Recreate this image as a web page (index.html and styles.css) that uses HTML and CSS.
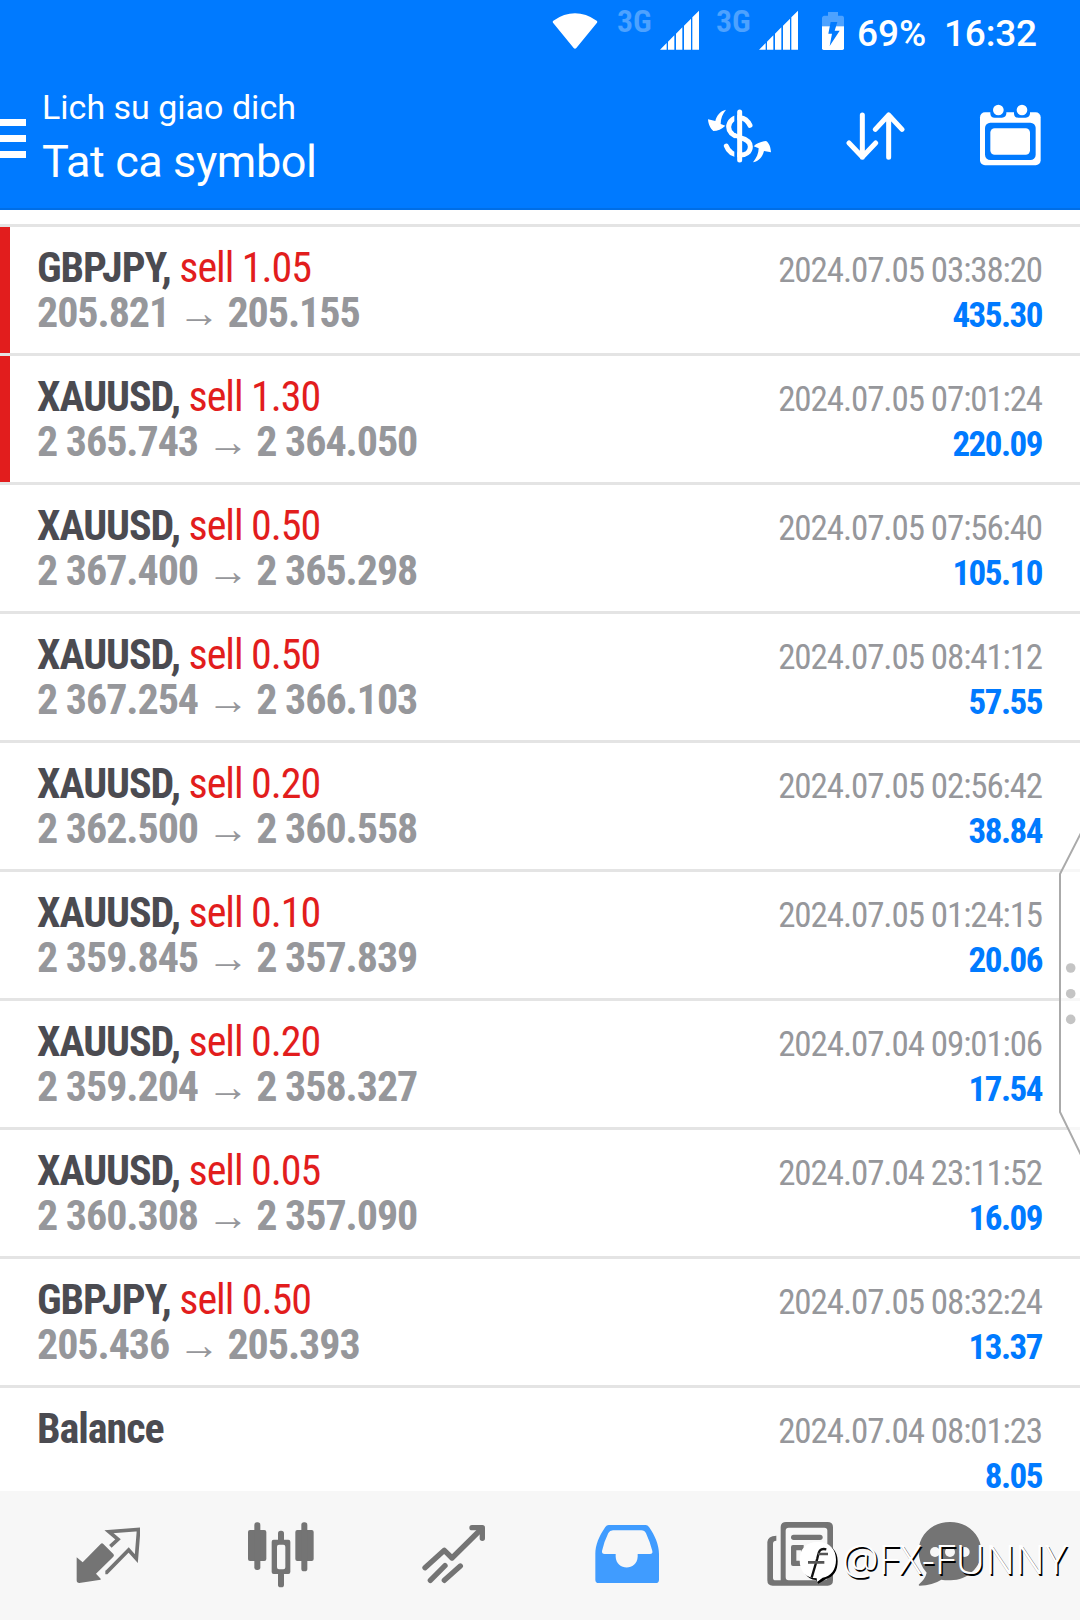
FILE: index.html
```
<!DOCTYPE html>
<html lang="vi">
<head>
    <meta charset="UTF-8">
    <meta name="viewport" content="width=device-width, initial-scale=1.0">
    <title>Lich su giao dich</title>
    <link rel="stylesheet" href="styles.css">
</head>
<body>
    <header class="header">
        <div class="status">
            <svg class="wifi" width="46" height="38" viewBox="36 36 138 114"><path d="M40 62Q105 18 170 62Q173 65 171 68L109 144Q105 149 101 144L39 68Q37 65 40 62Z"/></svg>
            <span class="net">3G</span>
            <svg class="signal" width="39" height="40" viewBox="0 0 117 120"><path d="M0 119L20 99V119ZM24 119V95L43 76V119ZM48 119V71L67 52V119ZM72 119V47L93 26V119ZM97 119V22L117 2V119Z"/></svg>
            <span class="net">3G</span>
            <svg class="signal" width="39" height="40" viewBox="0 0 117 120"><path d="M0 119L20 99V119ZM24 119V95L43 76V119ZM48 119V71L67 52V119ZM72 119V47L93 26V119ZM97 119V22L117 2V119Z"/></svg>
            <svg class="battery" width="22" height="38" viewBox="846 36 66 114">
                <path opacity=".3" d="M864 36H894V47H907Q912 48 912 53V79H846V53Q847 48 852 47H864Z"/>
                <path d="M846 79H912V145Q912 150 907 150H851Q846 150 846 145Z"/>
                <path class="blue" d="M872 66H892L884 92H899L869 138L876 101H865Z"/>
            </svg>
            <span class="percent">69%</span>
            <span class="time">16:32</span>
        </div>
        <div class="toolbar">
            <div class="menu"><i></i><i></i><i></i></div>
            <div class="titles">
                <div class="subtitle">Lich su giao dich</div>
                <div class="title">Tat ca symbol</div>
            </div>
            <div class="actions">
                <svg width="66" height="66" viewBox="48 40 198 198">
                    <path class="line" d="M180 107C174 94 164 85 150 84C130 82 116 96 116 112C116 130 130 138 150 144C170 149 181 157 181 171C181 188 166 196 150 196C128 196 115 186 109 169"/>
                    <path class="blue" d="M133 74H142V130H133ZM133 146H142V208H133Z"/>
                    <path class="line" d="M149 67V211"/>
                    <path d="M108 60C90 64 80 78 76 94L54 89C55 105 62 118 70 124C82 123 96 119 106 108L92 103C92 86 98 72 108 60Z"/>
                    <path d="M189 218C207 214 217 203 222 184L243 188C242 173 238 160 228 154C215 156 201 160 191 170L206 176C206 192 199 206 189 218Z"/>
                </svg>
                <svg width="59" height="66" viewBox="468 40 177 198"><path class="line" d="M517 76V203M477 160L517 202L557 160M596 203V76M556 119L596 76L636 119"/></svg>
                <svg width="63" height="66" viewBox="867 40 189 198">
                    <rect x="870" y="68" width="182" height="159" rx="15"/>
                    <path class="blue" d="M901 60V72Q902 84 914 84H936Q948 82 949 72V60ZM972 60V72Q973 84 985 84H1007Q1019 82 1020 72V60Z"/>
                    <circle cx="925" cy="61" r="16"/><circle cx="996" cy="61" r="16"/>
                    <rect class="blue" x="885" y="99" width="152" height="112" rx="16"/>
                    <rect x="901" y="116" width="119" height="79" rx="13"/>
                </svg>
            </div>
        </div>
    </header>

    <main class="list">
        <div class="row marked">
            <div class="deal"><b>GBPJPY,</b> <span>sell 1.05</span></div><div class="date">2024.07.05 03:38:20</div>
            <div class="price">205.821 <em>→</em> 205.155</div><div class="profit">435.30</div>
        </div>
        <div class="row marked">
            <div class="deal"><b>XAUUSD,</b> <span>sell 1.30</span></div><div class="date">2024.07.05 07:01:24</div>
            <div class="price">2 365.743 <em>→</em> 2 364.050</div><div class="profit">220.09</div>
        </div>
        <div class="row">
            <div class="deal"><b>XAUUSD,</b> <span>sell 0.50</span></div><div class="date">2024.07.05 07:56:40</div>
            <div class="price">2 367.400 <em>→</em> 2 365.298</div><div class="profit">105.10</div>
        </div>
        <div class="row">
            <div class="deal"><b>XAUUSD,</b> <span>sell 0.50</span></div><div class="date">2024.07.05 08:41:12</div>
            <div class="price">2 367.254 <em>→</em> 2 366.103</div><div class="profit">57.55</div>
        </div>
        <div class="row">
            <div class="deal"><b>XAUUSD,</b> <span>sell 0.20</span></div><div class="date">2024.07.05 02:56:42</div>
            <div class="price">2 362.500 <em>→</em> 2 360.558</div><div class="profit">38.84</div>
        </div>
        <div class="row">
            <div class="deal"><b>XAUUSD,</b> <span>sell 0.10</span></div><div class="date">2024.07.05 01:24:15</div>
            <div class="price">2 359.845 <em>→</em> 2 357.839</div><div class="profit">20.06</div>
        </div>
        <div class="row">
            <div class="deal"><b>XAUUSD,</b> <span>sell 0.20</span></div><div class="date">2024.07.04 09:01:06</div>
            <div class="price">2 359.204 <em>→</em> 2 358.327</div><div class="profit">17.54</div>
        </div>
        <div class="row">
            <div class="deal"><b>XAUUSD,</b> <span>sell 0.05</span></div><div class="date">2024.07.04 23:11:52</div>
            <div class="price">2 360.308 <em>→</em> 2 357.090</div><div class="profit">16.09</div>
        </div>
        <div class="row">
            <div class="deal"><b>GBPJPY,</b> <span>sell 0.50</span></div><div class="date">2024.07.05 08:32:24</div>
            <div class="price">205.436 <em>→</em> 205.393</div><div class="profit">13.37</div>
        </div>
        <div class="row">
            <div class="deal"><b>Balance</b></div><div class="date">2024.07.04 08:01:23</div>
            <div class="price">&nbsp;</div><div class="profit">8.05</div>
        </div>
    </main>

    <nav class="tabs">
        <div class="tab">
            <svg width="64" height="70" viewBox="48 30 192 210">
                <path d="M50 142L68 157L122 102Q126 98 130 102L160 132Q164 136 160 140L108 191L122 206V209L58 219Q50 219 50 211Z"/>
                <path class="outline" d="M151 109L174 88L147 65L236 58L229 146L206 120L140 187L136 187"/>
            </svg>
        </div>
        <div class="tab">
            <svg width="66" height="70" viewBox="563 30 198 210">
                <rect x="563" y="60" width="55" height="93" rx="6"/><rect x="582" y="37" width="18" height="143" rx="8"/>
                <rect x="705" y="60" width="55" height="93" rx="6"/><rect x="723" y="37" width="18" height="147" rx="8"/>
                <rect x="653" y="62" width="18" height="36" rx="8"/><rect x="653" y="185" width="18" height="47" rx="8"/>
                <path fill-rule="evenodd" d="M640 89H684Q690 89 690 95V186Q690 192 684 192H640Q634 192 634 186V95Q634 89 640 89ZM656 104Q650 104 650 110V172Q650 178 656 178H669Q675 178 675 172V110Q675 104 669 104Z"/>
            </svg>
        </div>
        <div class="tab">
            <svg width="64" height="70" viewBox="65 30 192 210">
                <path class="thick" d="M74 173L132 121L155 144L243 57M90 211L134 167M132 211L180 168"/>
                <path class="thick" d="M215 53H246V85"/>
            </svg>
        </div>
        <div class="tab active">
            <svg width="64" height="70" viewBox="585 30 192 210">
                <path fill-rule="evenodd" d="M626 45H737Q743 45 747 51C765 77 777 105 777 132V209Q777 219 767 219H596Q586 219 586 209V132C586 105 597 78 616 51Q620 45 626 45ZM639 61Q629 61 625 69Q613 93 606 123Q605 132 614 132H647V140C649 183 711 183 713 140V132H750Q759 132 757 123Q749 93 738 70Q734 61 724 61Z"/>
            </svg>
        </div>
        <div class="tab">
            <svg width="66" height="70" viewBox="55 30 198 210">
                <path fill-rule="evenodd" d="M112 36H237Q253 36 253 52V211Q253 227 237 227H72Q56 227 56 211V96Q57 78 83 77V92Q73 92 73 101V203Q73 211 81 211H96V52Q96 36 112 36ZM120 53Q111 53 111 62V201Q111 211 120 211H227Q236 211 236 201V62Q236 53 227 53Z"/>
                <rect x="127" y="74" width="95" height="16" rx="8"/>
                <path fill-rule="evenodd" d="M133 105H165V168H133Q127 168 127 162V111Q127 105 133 105ZM143 121V152H158V121Z"/>
                <rect x="175" y="110" width="47" height="14" rx="7"/><rect x="175" y="146" width="47" height="14" rx="7"/>
            </svg>
        </div>
        <div class="tab chat">
            <svg width="64" height="70" viewBox="507 30 192 210">
                <path d="M603 36C656 36 697 74 697 124C697 173 656 211 605 211Q585 211 577 209Q551 226 512 227Q507 226 511 222Q529 206 533 188Q509 163 509 124C509 74 550 36 603 36Z"/>
                <g class="holes"><circle cx="558" cy="126" r="15"/><circle cx="603" cy="126" r="15"/><circle cx="647" cy="126" r="15"/></g>
            </svg>
        </div>
    </nav>

    <!-- edge handle -->
    <svg class="edge" width="22" height="330" viewBox="0 0 22 330">
        <path d="M24 2L2 45V283L24 328"/>
        <circle cx="12.7" cy="139" r="4.8"/><circle cx="12.7" cy="164.7" r="4.8"/><circle cx="12.7" cy="190.4" r="4.8"/>
    </svg>

    <div class="watermark">
        <svg width="40" height="46" viewBox="148 92 120 138">
            <path class="shade" d="M207 103C246 103 264 124 264 156C264 184 252 203 231 208L206 223L199 212C171 209 158 187 157 157C157 123 173 104 207 103Z"/>
            <path class="bubble" d="M204 98C240 98 259 120 259 151C259 181 244 200 219 205L202 218L201 207C169 207 150 187 150 152C150 119 169 98 204 98Z"/>
            <path class="mark" d="M230 120C207 115 207 130 203 147L186 205"/>
            <path class="bar" d="M175 159H224M205 134H235"/>
        </svg>
        <span>@FX-FUNNY</span>
    </div>
</body>
</html>
```
FILE: styles.css
```
body {
    margin: 0;
    position: relative;
    display: flex;
    flex-direction: column;
    width: 1080px;
    height: 1620px;
    overflow: hidden;
    background: #fff;
    font-family: "Roboto Condensed", Roboto, sans-serif;
}
svg {
    display: block;
    flex: none;
}
.header {
    box-sizing: border-box;
    height: 210px;
    flex: none;
    background: #007aff;
    border-bottom: 2px solid #006ee6;
    color: #fff;
    fill: #fff;
    font-family: Roboto, sans-serif;
}
.blue {
    fill: #007aff;
}
.status {
    display: flex;
    align-items: flex-start;
    height: 62px;
    padding-left: 552px;
    font-weight: 500;
    font-size: 37px;
    line-height: 42px;
}
.wifi {
    margin: 12px 19px 0 0;
}
.net {
    width: 34px;
    margin: 2px 9px 0 0;
    font-family: "Roboto Condensed", Roboto, sans-serif;
    font-size: 32px;
    font-weight: 600;
    line-height: 38px;
    opacity: 0.3;
}
.signal {
    margin: 10px 17px 0 0;
}
.battery {
    margin: 12px 13px 0 7px;
}
.percent {
    width: 87px;
    margin-top: 13px;
}
.time {
    margin-top: 13px;
    letter-spacing: -0.2px;
}
.toolbar {
    display: flex;
    height: 146px;
}
.menu {
    width: 26px;
    padding-top: 57px;
}
.menu i {
    display: block;
    height: 7px;
    margin-bottom: 9px;
    background: #fff;
}
.titles {
    flex: 1;
    padding: 25px 0 0 16px;
}
.subtitle {
    font-size: 34px;
    line-height: 40px;
}
.title {
    margin-top: 8px;
    font-size: 45px;
    line-height: 53px;
    letter-spacing: -0.4px;
}
.actions {
    display: flex;
    gap: 74px;
    padding: 41px 38px 0 0;
}
.line {
    fill: none;
    stroke: #fff;
    stroke-width: 15;
    stroke-linecap: round;
    stroke-linejoin: round;
}
.list {
    flex: 1;
    min-height: 0;
    padding-top: 14px;
}
.row {
    box-sizing: border-box;
    display: grid;
    grid-template-columns: 1fr auto;
    grid-auto-rows: 45px;
    align-items: baseline;
    height: 129px;
    padding: 18px 38px 0 37px;
    border-top: 3px solid #e4e4e4;
    line-height: 45px;
    letter-spacing: -1.05px;
    white-space: nowrap;
}
.row:last-child {
    height: 111px;
}
.marked {
    background: linear-gradient(#e21d1d, #e21d1d) no-repeat 0 0 / 10px 100%;
}
.deal, .price {
    font-size: 42px;
}
.deal b {
    color: #4b4b51;
}
.deal span {
    color: #e21d1d;
}
.price {
    color: #96979b;
    font-weight: 700;
}
.price em {
    font-style: normal;
}
.date {
    color: #96979b;
    font-size: 35px;
    letter-spacing: -1.1px;
    text-align: right;
}
.profit {
    color: #007aff;
    font-size: 35px;
    font-weight: 700;
    line-height: 26px;
    letter-spacing: -1.5px;
    text-align: right;
}
.tabs {
    box-sizing: border-box;
    display: flex;
    flex: none;
    height: 129px;
    padding: 29px 0 0 21px;
    background: #f7f7f7;
    fill: #747474;
}
.tab {
    display: flex;
    justify-content: center;
    width: 173.2px;
}
.tab.active {
    fill: #409cff;
}
.tab.chat {
    width: 127px;
}
.outline {
    fill: none;
    stroke: #747474;
    stroke-width: 11;
}
.thick {
    fill: none;
    stroke: #747474;
    stroke-width: 16;
    stroke-linecap: round;
    stroke-linejoin: round;
}
.holes {
    fill: #f7f7f7;
}
.edge {
    position: absolute;
    top: 829px;
    right: 0;
    fill: #c4c4c4;
}
.edge path {
    fill: rgba(255, 255, 255, 0.7);
    stroke: #aaa;
    stroke-width: 2;
}
.watermark {
    position: absolute;
    left: 799px;
    top: 1540px;
    display: flex;
    gap: 3px;
    color: #fff;
    font-family: "Noto Sans", sans-serif;
    font-weight: 300;
    font-size: 41px;
    line-height: 36px;
    text-shadow: 1.5px 1.5px 0 #000;
}
.bubble {
    fill: #fff;
}
.shade {
    fill: #000;
}
.mark {
    fill: none;
    stroke: #111;
    stroke-width: 7;
}
.bar {
    fill: none;
    stroke: #555;
    stroke-width: 8;
}
```
